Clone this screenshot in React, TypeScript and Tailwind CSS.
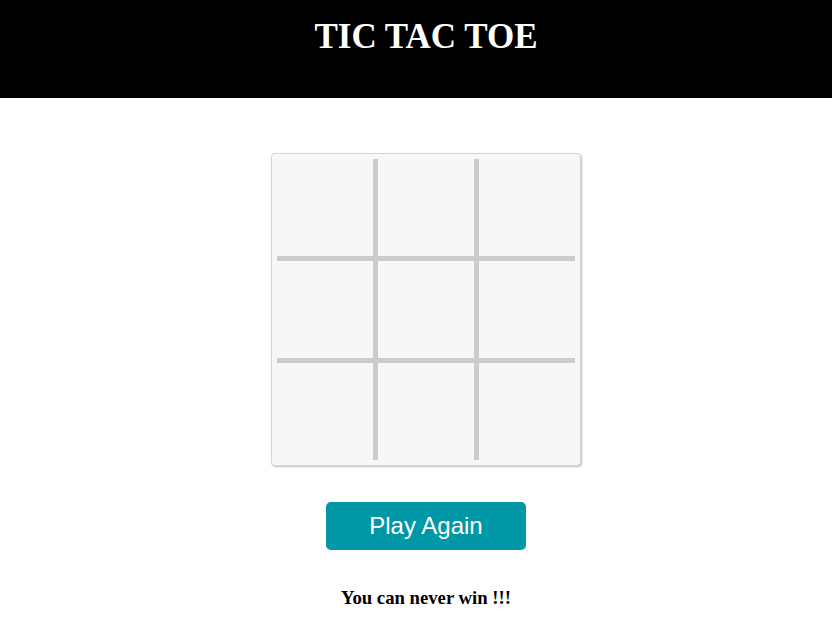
import React from "react";

export default function App() {
  const cells = Array.from({ length: 9 });
  return (
    <div className="min-h-screen bg-white">
      <header className="h-[98px] bg-black pl-5 pt-[17px]">
        <h1
          className="text-center text-[35px] leading-[40px] font-bold text-white"
          style={{ fontFamily: '"Liberation Serif", "Times New Roman", serif' }}
        >
          TIC TAC TOE
        </h1>
      </header>
      <main className="flex flex-col items-center pl-5 pt-[55px]">
        <div className="w-[310px] h-[313px] rounded-[4px] border border-[#d6d6d6] bg-[#f7f7f7] p-[5px] shadow-[1px_1px_2px_rgba(0,0,0,0.25)]">
          <div className="grid grid-cols-[96px_96px_96px] grid-rows-[97px_97px_97px] gap-[5px] bg-[#cccccc]">
            {cells.map((_, i) => (
              <div key={i} className="bg-[#f7f7f7]" />
            ))}
          </div>
        </div>
        <button
          className="mt-[36px] w-[200px] h-[48px] rounded-[5px] bg-[#0097a7] text-white text-[24px] leading-[28px]"
          style={{ fontFamily: '"Liberation Sans", Arial, sans-serif' }}
        >
          Play Again
        </button>
        <p
          className="mt-[36px] text-[18.72px] leading-[24px] font-bold text-black"
          style={{ fontFamily: '"Liberation Serif", "Times New Roman", serif' }}
        >
          You can never win !!!
        </p>
      </main>
    </div>
  );
}
